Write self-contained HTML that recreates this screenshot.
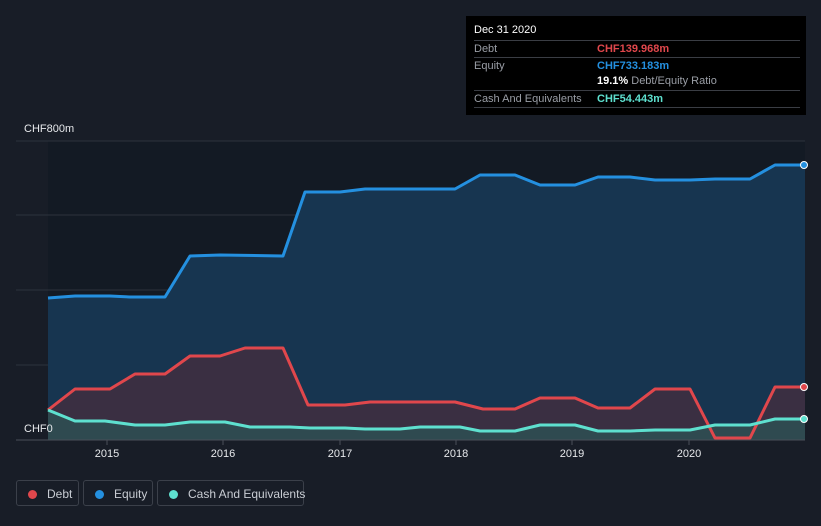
<!DOCTYPE html>
<html><head><style>
body{margin:0;width:821px;height:526px;background:#181d27;font-family:"Liberation Sans",sans-serif;overflow:hidden;position:relative}
.tt{position:absolute;left:466px;top:16px;width:340px;height:99px;background:#000;color:#fff;font-size:11px}
.row{position:absolute;left:8px;right:6px;border-top:1px solid #3a3d44;height:16px;line-height:16px;color:#9a9ea6}
.v{position:absolute;left:123px;font-weight:bold}
.leg{position:absolute;top:480px;height:26px;border:1px solid #3b404a;border-radius:3px;color:#c8ccd3;font-size:12px;line-height:26px;box-sizing:border-box;white-space:nowrap}
.dot{display:inline-block;width:9px;height:9px;border-radius:50%;margin:0 10px 0 11px;vertical-align:-1px}
</style></head><body>
<svg width="821" height="526" style="position:absolute;left:0;top:0">
<rect x="48" y="141" width="757" height="299" fill="#131a24"/>
<g stroke="#2c323d" stroke-width="1"><line x1="16" y1="141" x2="805" y2="141"/><line x1="16" y1="215" x2="805" y2="215"/><line x1="16" y1="290" x2="805" y2="290"/><line x1="16" y1="365" x2="805" y2="365"/></g>
<path d="M48 298L75 296L110 296L130 297L165 297L190 256L220 255L283 256L305 192L340 192L365 189L455 189L480 175L515 175L540 185L575 185L598 177L630 177L655 180L690 180L715 179L750 179L775 165L805 165L805 440L48 440Z" fill="#173550"/>
<path d="M48 410L75 389L110 389L135 374L165 374L190 356L220 356L245 348L283 348L308 405L345 405L370 402L455 402L483 409L515 409L540 398L575 398L598 408L630 408L655 389L690 389L715 438L750 438L775 387L805 387L805 440L48 440Z" fill="#3a2f42"/>
<path d="M48 410L75 421L105 421L135 425L165 425L190 422L225 422L250 427L290 427L310 428L345 428L365 429L400 429L420 427L460 427L480 431L515 431L540 425L575 425L598 431L630 431L655 430L690 430L715 425L750 425L775 419L805 419L805 440L48 440Z" fill="#2f4a50"/>
<g fill="none" stroke-width="3" stroke-linejoin="round">
<path d="M48 298L75 296L110 296L130 297L165 297L190 256L220 255L283 256L305 192L340 192L365 189L455 189L480 175L515 175L540 185L575 185L598 177L630 177L655 180L690 180L715 179L750 179L775 165L805 165" stroke="#2490e0"/>
<path d="M48 410L75 389L110 389L135 374L165 374L190 356L220 356L245 348L283 348L308 405L345 405L370 402L455 402L483 409L515 409L540 398L575 398L598 408L630 408L655 389L690 389L715 438L750 438L775 387L805 387" stroke="#e0474c"/>
<path d="M48 410L75 421L105 421L135 425L165 425L190 422L225 422L250 427L290 427L310 428L345 428L365 429L400 429L420 427L460 427L480 431L515 431L540 425L575 425L598 431L630 431L655 430L690 430L715 425L750 425L775 419L805 419" stroke="#5ee0cf"/>
</g>
<circle cx="804" cy="165" r="3.5" fill="#2490e0" stroke="#fff" stroke-width="1"/>
<circle cx="804" cy="387" r="3.5" fill="#e0474c" stroke="#fff" stroke-width="1"/>
<circle cx="804" cy="419" r="3.5" fill="#5ee0cf" stroke="#fff" stroke-width="1"/>
<line x1="16" y1="440" x2="805" y2="440" stroke="#4a4f58"/>
<g stroke="#4a4f58"><line x1="107" y1="440" x2="107" y2="445"/><line x1="223" y1="440" x2="223" y2="445"/><line x1="340" y1="440" x2="340" y2="445"/><line x1="456" y1="440" x2="456" y2="445"/><line x1="572" y1="440" x2="572" y2="445"/><line x1="689" y1="440" x2="689" y2="445"/></g>
<g fill="#e6e8eb" font-size="11" font-family="Liberation Sans" text-anchor="middle"><text x="107" y="457">2015</text><text x="223" y="457">2016</text><text x="340" y="457">2017</text><text x="456" y="457">2018</text><text x="572" y="457">2019</text><text x="689" y="457">2020</text></g>
<text x="24" y="132" fill="#e6e8eb" font-size="11">CHF800m</text>
<text x="24" y="432" fill="#e6e8eb" font-size="11">CHF0</text>
</svg>
<div class="tt">
<div style="position:absolute;left:8px;top:8px">Dec 31 2020</div>
<div class="row" style="top:24px">Debt<span class="v" style="color:#e0474c">CHF139.968m</span></div>
<div class="row" style="top:41px">Equity<span class="v" style="color:#2490e0">CHF733.183m</span></div>
<div class="row" style="top:57px;border:none"><span class="v" style="color:#fff">19.1% <span style="color:#9a9ea6;font-weight:normal">Debt/Equity Ratio</span></span></div>
<div class="row" style="top:74px;border-bottom:1px solid #3a3d44">Cash And Equivalents<span class="v" style="color:#5ee0cf">CHF54.443m</span></div>
</div>
<div class="leg" style="left:16px;width:63px"><span class="dot" style="background:#e0474c"></span>Debt</div>
<div class="leg" style="left:83px;width:70px"><span class="dot" style="background:#2490e0"></span>Equity</div>
<div class="leg" style="left:157px;width:147px"><span class="dot" style="background:#5ee0cf"></span>Cash And Equivalents</div>
</body></html>
